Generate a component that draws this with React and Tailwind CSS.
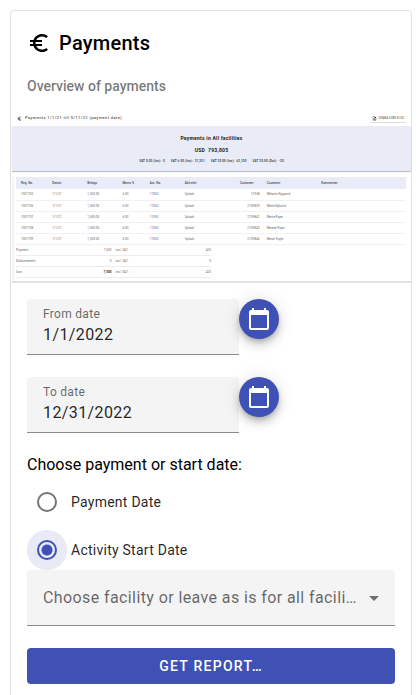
import React, { useState } from 'react';
import { MdEuroSymbol, MdCalendarToday, MdArrowDropDown, MdUploadFile } from 'react-icons/md';

const rows = [
    ['1001705', '1/1/21', '1,500.00', '6.00', '11053', 'Splash', '12958', 'Melanie Nygaard'],
    ['1001706', '1/1/21', '1,500.00', '6.00', '11053', 'Splash', '2109809', 'Mette Nyholm'],
    ['1001707', '1/1/21', '1,500.00', '6.00', '11053', 'Splash', '2109841', 'Mette Pape'],
    ['1001708', '1/1/21', '1,500.00', '6.00', '11053', 'Splash', '2109843', 'Merete Pape'],
    ['1001709', '1/1/21', '1,500.00', '6.00', '11053', 'Splash', '2109845', 'Merat Fugle'],
];

const totals = [
    ['Payment', '7,500', '425'],
    ['Disbursement', '0', '0'],
    ['Sum', '7,500', '425'],
];

// Miniature of the generated report
const ReportPreview = () => (
    <div className="ml-px border-b-2 border-[#e2e2e2] bg-white pt-[5px] text-[3px] leading-[4px] tracking-wide text-[#666]">
        <div className="flex h-4 items-center justify-between pr-[5px] pl-[5px]">
            <div className="flex items-center gap-[3px] text-[4px] tracking-widest text-[#222]">
                <MdEuroSymbol className="h-[5px] w-[5px]" />
                <span>Payments 1/1/21 till 5/11/22 (payment date)</span>
            </div>
            <button className="flex h-2 items-center gap-[2px] rounded-[1px] px-[2px] text-[3px] tracking-wide text-[#444] shadow-[0_1px_1px_rgba(0,0,0,0.15)]">
                <MdUploadFile className="h-[5px] w-[5px] text-black" />
                SPARA SOM XLSX
            </button>
        </div>

        <div className="flex h-[45px] flex-col items-center rounded-[1px] bg-[#e9ecf6] pt-[9px] text-[#222] shadow-[0_1px_1px_rgba(0,0,0,0.3)]">
            <div className="text-[5px] leading-[6px] font-bold tracking-wider">Payments in All facilities</div>
            <div className="mt-[6px] text-[5px] leading-[6px] font-bold tracking-wider">USD&nbsp; 793,805</div>
            <div className="mt-[6px] flex gap-[6px] font-medium tracking-wider">
                <span>VAT 0.00 (Inc): &nbsp;0</span>
                <span>VAT 6.00 (Inc): &nbsp;27,331</span>
                <span>VAT 25.00 (Inc): &nbsp;62,100</span>
                <span>VAT 25.00 (Out): &nbsp;-20</span>
            </div>
        </div>

        <div className="mt-[6px] border-l-2 border-[#f3f3f3] pr-[5px] pb-[3px] pl-[2px]">
            <table className="w-full table-fixed border-collapse text-left">
                <thead>
                    <tr className="h-3 bg-[#e9ecf6] text-[#444]">
                        <th className="w-[8%] p-0 pl-[5px] font-medium">Reg. No.</th>
                        <th className="w-[9%] p-0 pl-[5px] font-medium">Datum</th>
                        <th className="w-[9%] p-0 pl-[5px] font-medium">Belopp</th>
                        <th className="w-[7%] p-0 pl-[5px] font-medium">Moms %</th>
                        <th className="w-[9%] p-0 pl-[5px] font-medium">Act. No.</th>
                        <th className="w-[12%] p-0 pl-[5px] font-medium">Aktivitet</th>
                        <th className="w-[9%] p-0 pr-2 text-right font-medium">Customer</th>
                        <th className="w-[14%] p-0 pl-[5px] font-medium">Customer</th>
                        <th className="p-0 pl-[5px] font-medium">Kommentar</th>
                    </tr>
                </thead>
                <tbody>
                    {rows.map((row) => (
                        <tr key={row[0]} className="h-[11px] border-b border-[#f1f1f1]">
                            {row.map((cell, i) => (
                                <td key={i} className={i === 6 ? 'p-0 pr-[2px] text-right' : 'p-0 pl-[5px]'}>{cell}</td>
                            ))}
                            <td />
                        </tr>
                    ))}
                </tbody>
            </table>
            <table className="w-1/2 table-fixed border-collapse text-left">
                <tbody>
                    {totals.map(([label, amount, vat]) => (
                        <tr key={label} className="h-[11px] border-b border-[#ececec]">
                            <td className="w-[30%] p-0">{label}</td>
                            <td className={`w-[19%] p-0 text-right ${label === 'Sum' ? 'font-bold text-[#222]' : ''}`}>{amount}</td>
                            <td className="w-[30%] p-0 pl-1">incl. VAT:</td>
                            <td className="p-0 text-right">{vat}</td>
                        </tr>
                    ))}
                </tbody>
            </table>
        </div>
    </div>
);

const DateField = ({ id, label, value, onChange }) => (
    <div className="flex items-start">
        <div className="flex h-14 w-[212px] flex-col rounded-t border-b border-[#8c8c8c] bg-[#f4f4f4] px-4 pt-2">
            <label htmlFor={id} className="text-xs leading-[14px] tracking-wide text-black/60">{label}</label>
            <input
                id={id}
                type="text"
                value={value}
                onChange={(e) => onChange(e.target.value)}
                className="h-[26px] w-full bg-transparent text-base tracking-wide text-black/87 outline-none"
            />
        </div>
        <button
            aria-label={`Pick ${label.toLowerCase()}`}
            className="flex h-10 w-10 items-center justify-center rounded-full bg-[#3f51b5] text-white shadow-[0_3px_5px_-1px_rgba(0,0,0,0.2),0_6px_10px_rgba(0,0,0,0.14),0_1px_18px_rgba(0,0,0,0.12)]"
        >
            <MdCalendarToday className="h-6 w-6" />
        </button>
    </div>
);

const RadioOption = ({ id, label, checked, onChange }) => (
    <div className="flex h-10 items-center gap-1">
        <span className={`flex h-10 w-10 items-center justify-center rounded-full ${checked ? 'bg-[#e8eaf6]' : ''}`}>
            <input
                id={id}
                type="radio"
                name="dateType"
                checked={checked}
                onChange={onChange}
                className="h-5 w-5 appearance-none rounded-full border-2 border-[#757575] checked:border-[#3f51b5] checked:bg-[radial-gradient(circle,#3f51b5_5px,transparent_6px)]"
            />
        </span>
        <label htmlFor={id} className="text-sm tracking-[0.25px] text-black/87">{label}</label>
    </div>
);

export default function App() {
    const [from, setFrom] = useState('1/1/2022');
    const [to, setTo] = useState('12/31/2022');
    const [dateType, setDateType] = useState('activity');

    return (
        <div className="h-screen overflow-hidden bg-white pt-[10px] pr-2 pl-[10px] font-[Roboto,sans-serif] text-black">
            <main className="rounded border border-[#e0e0e0] pb-4">
                <header className="px-4 pt-4">
                    <h1 className="flex h-8 items-center gap-2 text-xl font-medium tracking-[0.0125em]">
                        <MdEuroSymbol className="h-6 w-6" />
                        Payments
                    </h1>
                    <p className="mt-4 text-sm leading-[22px] font-medium text-black/54">Overview of payments</p>
                </header>

                <div className="mt-2">
                    <ReportPreview />
                </div>

                <section className="px-4 pt-4">
                    <div className="flex flex-col gap-[22px]">
                        <DateField id="from" label="From date" value={from} onChange={setFrom} />
                        <DateField id="to" label="To date" value={to} onChange={setTo} />
                    </div>

                    <fieldset className="mt-5">
                        <legend className="mb-[5px] text-base leading-6">Choose payment or start date:</legend>
                        <div className="flex flex-col gap-2">
                            <RadioOption id="payment" label="Payment Date" checked={dateType === 'payment'} onChange={() => setDateType('payment')} />
                            <RadioOption id="activity" label="Activity Start Date" checked={dateType === 'activity'} onChange={() => setDateType('activity')} />
                        </div>
                    </fieldset>

                    <div className="relative">
                        <select
                            aria-label="Facility"
                            className="h-14 w-full appearance-none truncate rounded-t border-b border-[#8c8c8c] bg-[#f4f4f4] pr-9 pl-4 text-base tracking-wide text-black/60 outline-none"
                        >
                            <option>Choose facility or leave as is for all facilities</option>
                        </select>
                        <MdArrowDropDown className="pointer-events-none absolute top-4 right-[9px] h-6 w-6 text-[#707070]" />
                    </div>

                    <button className="mt-[22px] h-9 w-full rounded bg-[#3f51b5] text-sm font-medium tracking-[0.09em] text-white">
                        GET REPORT…
                    </button>
                </section>
            </main>
        </div>
    );
}
